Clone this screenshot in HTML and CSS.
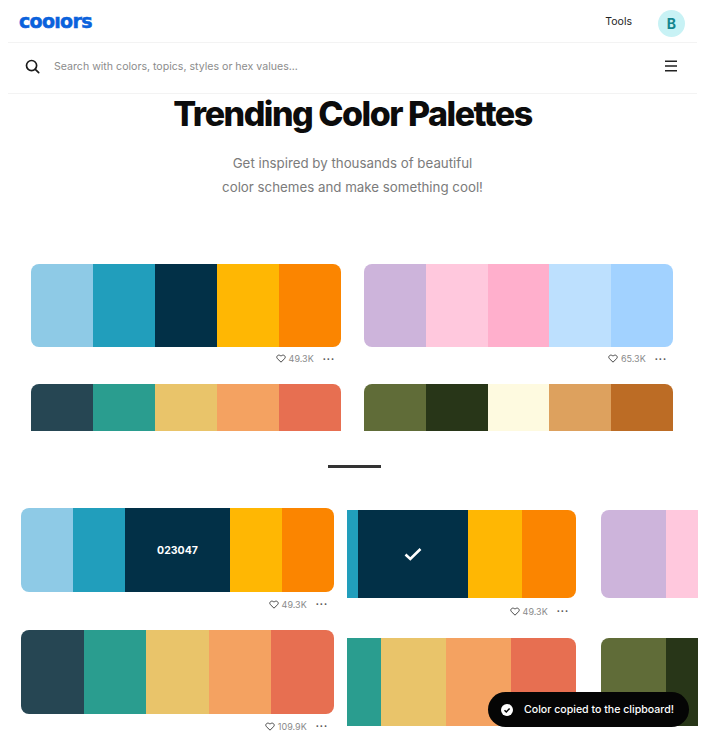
FILE: index.html
```html
<!DOCTYPE html>
<html lang="en">
<head>
    <meta charset="UTF-8">
    <meta name="viewport" content="width=device-width, initial-scale=1.0">
    <title>Trending Color Palettes</title>
    <link rel="stylesheet" href="styles.css">
</head>
<body>
    <div class="page">
        <!-- Upper part of the page, cut off at the second row -->
        <section class="top">
            <header class="navbar">
                <span class="logo">coo<span class="logo-l">l</span>ors</span>
                <div class="nav-right">
                    <span class="nav-link">Tools</span>
                    <span class="avatar">B</span>
                </div>
            </header>

            <div class="searchbar">
                <svg class="search-icon" viewBox="0 0 16 16" width="15" height="15">
                    <circle cx="7" cy="7" r="5.4"></circle>
                    <path d="M11 11l3.6 3.6"></path>
                </svg>
                <span class="search-text">Search with colors, topics, styles or hex values...</span>
                <svg class="menu-icon" viewBox="0 0 14 12" width="14" height="12">
                    <path d="M1 1.2h12M1 6h12M1 10.8h12"></path>
                </svg>
            </div>

            <h1 class="title">Trending Color Palettes</h1>
            <p class="subtitle">Get inspired by thousands of beautiful<br>color schemes and make something cool!</p>

            <div class="top-grid">
                <div class="item">
                    <div class="palette palette-top">
                        <span class="sw c1"></span><span class="sw c2"></span><span class="sw c3"></span><span class="sw c4"></span><span class="sw c5"></span>
                    </div>
                    <div class="meta">
                        <svg class="heart" viewBox="0 0 12 11" width="10" height="9"><path d="M6 10L1.5 5.6C-.6 3.3 2.7-.6 6 2.6 9.3-.6 12.6 3.3 10.5 5.6z"></path></svg>
                        <span>49.3K</span>
                        <span class="dots">•••</span>
                    </div>
                </div>
                <div class="item">
                    <div class="palette palette-top">
                        <span class="sw c6"></span><span class="sw c7"></span><span class="sw c8"></span><span class="sw c9"></span><span class="sw c10"></span>
                    </div>
                    <div class="meta">
                        <svg class="heart" viewBox="0 0 12 11" width="10" height="9"><path d="M6 10L1.5 5.6C-.6 3.3 2.7-.6 6 2.6 9.3-.6 12.6 3.3 10.5 5.6z"></path></svg>
                        <span>65.3K</span>
                        <span class="dots">•••</span>
                    </div>
                </div>
                <div class="item">
                    <div class="palette palette-top">
                        <span class="sw c11"></span><span class="sw c12"></span><span class="sw c13"></span><span class="sw c14"></span><span class="sw c15"></span>
                    </div>
                </div>
                <div class="item">
                    <div class="palette palette-top">
                        <span class="sw c16"></span><span class="sw c17"></span><span class="sw c18"></span><span class="sw c19"></span><span class="sw c20"></span>
                    </div>
                </div>
            </div>
        </section>

        <div class="divider"></div>

        <!-- Lower part: the three hover states -->
        <section class="states">
            <div class="col col-first">
                <div class="item">
                    <div class="palette palette-first">
                        <span class="sw c1"></span><span class="sw c2"></span>
                        <span class="sw c3 sw-wide"><span class="hex">023047</span></span>
                        <span class="sw c4"></span><span class="sw c5"></span>
                    </div>
                    <div class="meta meta-first">
                        <svg class="heart" viewBox="0 0 12 11" width="10" height="9"><path d="M6 10L1.5 5.6C-.6 3.3 2.7-.6 6 2.6 9.3-.6 12.6 3.3 10.5 5.6z"></path></svg>
                        <span>49.3K</span>
                        <span class="dots">•••</span>
                    </div>
                </div>
                <div class="item">
                    <div class="palette palette-first">
                        <span class="sw c11"></span><span class="sw c12"></span><span class="sw c13"></span><span class="sw c14"></span><span class="sw c15"></span>
                    </div>
                    <div class="meta meta-first">
                        <svg class="heart" viewBox="0 0 12 11" width="10" height="9"><path d="M6 10L1.5 5.6C-.6 3.3 2.7-.6 6 2.6 9.3-.6 12.6 3.3 10.5 5.6z"></path></svg>
                        <span>109.9K</span>
                        <span class="dots">•••</span>
                    </div>
                </div>
            </div>

            <div class="col col-second">
                <div class="item">
                    <div class="palette palette-second">
                        <span class="sw c2 w11"></span>
                        <span class="sw c3 w110 sw-center">
                            <svg class="check" viewBox="0 0 18 14" width="18" height="14"><path d="M1.5 7.5l4.8 4.5L16.5 2"></path></svg>
                        </span>
                        <span class="sw c4"></span><span class="sw c5"></span>
                    </div>
                    <div class="meta meta-second">
                        <svg class="heart" viewBox="0 0 12 11" width="10" height="9"><path d="M6 10L1.5 5.6C-.6 3.3 2.7-.6 6 2.6 9.3-.6 12.6 3.3 10.5 5.6z"></path></svg>
                        <span>49.3K</span>
                        <span class="dots">•••</span>
                    </div>
                </div>
                <div class="item">
                    <div class="palette palette-second">
                        <span class="sw c12 w34"></span><span class="sw c13"></span><span class="sw c14"></span><span class="sw c15"></span>
                    </div>
                </div>
            </div>

            <div class="col col-third">
                <div class="palette palette-third">
                    <span class="sw c6 w65"></span><span class="sw c7"></span>
                </div>
                <div class="palette palette-third palette-third-low">
                    <span class="sw c16 w65"></span><span class="sw c17"></span>
                </div>
            </div>
        </section>

        <div class="toast">
            <svg class="toast-icon" viewBox="0 0 12 12" width="12" height="12">
                <circle cx="6" cy="6" r="6"></circle>
                <path d="M3.5 6.2l1.8 1.8 3.3-3.6"></path>
            </svg>
            <span>Color copied to the clipboard!</span>
        </div>
    </div>
</body>
</html>
```

FILE: styles.css
```css
/* Page */
* {
    box-sizing: border-box;
}

body {
    margin: 0;
    background-color: white;
    font-family: "Inter", "Liberation Sans", sans-serif;
}

.page {
    position: relative;
    width: 705px;
    height: 731px;
    overflow: hidden;
}

/* Upper part */
.top {
    height: 431px;
    overflow: hidden;
    padding: 0 8px;
}

.navbar {
    display: flex;
    justify-content: space-between;
    align-items: center;
    height: 43px;
    padding: 0 12px 0 11px;
    border-bottom: 1px solid #f3f3f3;
}

.logo {
    font-family: "DejaVu Sans", sans-serif;
    font-size: 19px;
    font-weight: 700;
    letter-spacing: -0.7px;
    color: #0a62dc;
    -webkit-text-stroke: 0.5px #0a62dc;
    line-height: 1;
}

.logo-l {
    display: inline-block;
    transform: scaleY(0.75);
    transform-origin: 50% 78%;
}

.nav-right {
    display: flex;
    align-items: center;
    gap: 26px;
}

.nav-link {
    font-size: 10.5px;
    color: #222;
}

.avatar {
    display: flex;
    justify-content: center;
    align-items: center;
    width: 27px;
    height: 27px;
    margin-top: 4px;
    border-radius: 50%;
    background-color: #c8f2f5;
    color: #14868f;
    font-size: 14px;
    font-weight: 700;
}

.searchbar {
    display: flex;
    align-items: center;
    height: 51px;
    padding: 0 19px 4px 17px;
    border-bottom: 1px solid #f3f3f3;
}

.search-icon {
    fill: none;
    stroke: #1a1a1a;
    stroke-width: 1.8;
    stroke-linecap: round;
}

.search-text {
    flex: 1;
    margin-left: 14px;
    font-size: 10.6px;
    color: #8c8c8c;
}

.menu-icon {
    fill: none;
    stroke: #222;
    stroke-width: 1.4;
}

.title {
    margin: -1px 0 0;
    text-align: center;
    font-size: 34px;
    line-height: 42px;
    font-weight: 800;
    letter-spacing: -1.5px;
    color: #0c0c0c;
}

.subtitle {
    margin: 16px 0 0;
    text-align: center;
    font-size: 13.3px;
    line-height: 24px;
    color: #7b7b7b;
}

.top-grid {
    display: grid;
    grid-template-columns: 310px 309px;
    column-gap: 23px;
    row-gap: 14px;
    margin: 65px 0 0 23px;
}

/* Palettes */
.palette {
    display: flex;
    overflow: hidden;
    border-radius: 8px;
}

.palette-top {
    height: 83px;
}

.palette-first {
    height: 84px;
}

.palette-second {
    height: 88px;
    border-radius: 0 8px 8px 0;
}

.palette-third {
    height: 88px;
    border-radius: 8px 0 0 8px;
}

.palette-third-low {
    margin-top: 40px;
}

.sw {
    flex: 1;
}

.sw-wide {
    flex: 0 0 105px;
    display: flex;
    justify-content: center;
    align-items: center;
}

.sw-center {
    display: flex;
    justify-content: center;
    align-items: center;
}

.w11 { flex: 0 0 11px; }
.w34 { flex: 0 0 34px; }
.w65 { flex: 0 0 65px; }
.w110 { flex: 0 0 110px; }

.hex {
    font-size: 10.5px;
    font-weight: 700;
    color: white;
}

.check {
    fill: none;
    stroke: white;
    stroke-width: 2.6;
}

.c1 { background-color: #8ecae6; }
.c2 { background-color: #219ebc; }
.c3 { background-color: #023047; }
.c4 { background-color: #ffb703; }
.c5 { background-color: #fb8500; }
.c6 { background-color: #cdb4db; }
.c7 { background-color: #ffc8dd; }
.c8 { background-color: #ffafcc; }
.c9 { background-color: #bde0fe; }
.c10 { background-color: #a2d2ff; }
.c11 { background-color: #264653; }
.c12 { background-color: #2a9d8f; }
.c13 { background-color: #e9c46a; }
.c14 { background-color: #f4a261; }
.c15 { background-color: #e76f51; }
.c16 { background-color: #606c38; }
.c17 { background-color: #283618; }
.c18 { background-color: #fefae0; }
.c19 { background-color: #dda15e; }
.c20 { background-color: #bc6c25; }

/* Likes row */
.meta {
    display: flex;
    justify-content: flex-end;
    align-items: center;
    gap: 3px;
    height: 23px;
    padding-right: 6px;
    font-size: 9px;
    color: #8a8a8a;
}

.heart {
    fill: none;
    stroke: #444;
    stroke-width: 1.2;
}

.dots {
    margin-left: 6px;
    font-size: 5.5px;
    letter-spacing: 1px;
    color: #555;
}

/* Divider */
.divider {
    width: 53px;
    height: 3px;
    margin: 34px 0 0 328px;
    background-color: #333;
}

/* Lower part */
.states {
    display: flex;
    margin-top: 40px;
    padding-left: 21px;
}

.col-first {
    flex: 0 0 313px;
}

.col-first .item + .item {
    margin-top: 14px;
}

.col-second {
    flex: 0 0 229px;
    margin: 2px 0 0 13px;
}

.col-second .item + .item {
    margin-top: 14px;
}

.col-third {
    flex: 0 0 97px;
    margin: 2px 0 0 25px;
}

.meta-first {
    height: 24px;
}

.meta-second {
    height: 26px;
    padding-right: 7px;
}

/* Toast */
.toast {
    position: absolute;
    left: 488px;
    top: 692px;
    display: flex;
    align-items: center;
    gap: 11px;
    width: 201px;
    height: 35px;
    padding-left: 13px;
    border-radius: 18px;
    background-color: #050505;
    color: white;
    font-size: 10.6px;
    font-weight: 500;
}

.toast-icon circle {
    fill: white;
}

.toast-icon path {
    fill: none;
    stroke: #050505;
    stroke-width: 1.5;
}
```
